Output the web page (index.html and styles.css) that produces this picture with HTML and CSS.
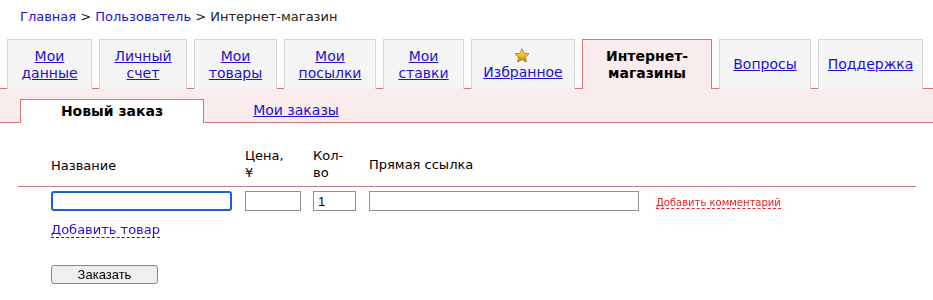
FILE: index.html
```html
<!DOCTYPE html>
<html lang="ru">
<head>
    <meta charset="UTF-8">
    <title>Интернет-магазин</title>
    <link rel="stylesheet" href="styles.css">
</head>
<body>
    <!-- хлебные крошки -->
    <div class="crumbs">
        <a href="#">Главная</a> &gt; <a href="#">Пользователь</a> &gt; Интернет-магазин
    </div>

    <!-- главные вкладки -->
    <ul class="tabs">
        <li class="tab"><a href="#">Мои<br>данные</a></li>
        <li class="tab"><a href="#">Личный<br>счет</a></li>
        <li class="tab"><a href="#">Мои<br>товары</a></li>
        <li class="tab"><a href="#">Мои<br>посылки</a></li>
        <li class="tab"><a href="#">Мои<br>ставки</a></li>
        <li class="tab">
            <span class="star">
                <svg width="16" height="15" viewBox="0 0 16 15">
                    <defs>
                        <linearGradient id="gold" x1="0" y1="0" x2="0" y2="1">
                            <stop offset="0" stop-color="#fff2a0"/>
                            <stop offset="0.5" stop-color="#f0c020"/>
                            <stop offset="1" stop-color="#c08010"/>
                        </linearGradient>
                    </defs>
                    <polygon points="8,0.8 10.1,5.4 15,5.8 11.3,9.1 12.4,14 8,11.4 3.6,14 4.7,9.1 1,5.8 5.9,5.4" fill="url(#gold)" stroke="#a87010" stroke-width="0.8" stroke-linejoin="round"/>
                </svg>
            </span>
            <a href="#">Избранное</a>
        </li>
        <li class="tab active">Интернет-<br>магазины</li>
        <li class="tab"><a href="#">Вопросы</a></li>
        <li class="tab"><a href="#">Поддержка</a></li>
    </ul>

    <!-- подвкладки -->
    <div class="subbar">
        <div class="subtab current">Новый заказ</div>
        <div class="subtab"><a href="#">Мои заказы</a></div>
    </div>

    <form class="order">
        <table class="items">
            <tr class="head">
                <th class="c-name">Название</th>
                <th class="c-price">Цена,<br>¥</th>
                <th class="c-qty">Кол-<br>во</th>
                <th class="c-link">Прямая ссылка</th>
                <th class="c-note"></th>
            </tr>
            <tr>
                <td class="c-name"><input type="text" class="inp inp-name" autofocus></td>
                <td class="c-price"><input type="text" class="inp inp-price"></td>
                <td class="c-qty"><input type="text" class="inp inp-qty" value="1"></td>
                <td class="c-link"><input type="text" class="inp inp-link"></td>
                <td class="c-note"><a href="#" class="dashed comment">Добавить комментарий</a></td>
            </tr>
        </table>

        <div class="add-row">
            <a href="#" class="dashed add">Добавить товар</a>
        </div>

        <div class="submit-row">
            <button type="button" class="btn">Заказать</button>
        </div>
    </form>
</body>
</html>
```

FILE: styles.css
```css
body {
    margin: 0;
    font-family: "DejaVu Sans", Verdana, sans-serif;
    color: #000;
    background: #fff;
}

a {
    color: #2411cf;
}

.crumbs {
    padding: 8px 0 0 20px;
    height: 18px;
    line-height: 18px;
    font-size: 13px;
    color: #222;
    margin-bottom: 13px;
}
.crumbs a {
    text-decoration: none;
}

/* главные вкладки */
.tabs {
    list-style: none;
    margin: 0 10px 0 7px;
    padding: 0;
    display: grid;
    grid-template-columns: 85px 88px 83px 92px 81px 104px 130px 92px 105px;
    column-gap: 7px;
    height: 49px;
    position: relative;
    z-index: 1;
}
.tab {
    display: flex;
    flex-direction: column;
    justify-content: center;
    align-items: center;
    text-align: center;
    font-size: 14px;
    line-height: 17px;
    background: #f5f5f5;
    border: 1px solid #d6d6d6;
    border-bottom: none;
}
.tab.active {
    height: 50px;
    box-sizing: border-box;
    font-weight: bold;
    background: #f8ecec;
    border-color: #d87474;
}
.star {
    display: block;
    height: 15px;
    margin: 0 3px 1px 0;
}
.star svg {
    display: block;
}

/* подвкладки */
.subbar {
    display: flex;
    align-items: flex-end;
    background: #f8ecec;
    border-top: 1px solid #d87474;
    border-bottom: 1px solid #d87474;
    padding: 10px 0 0 20px;
    height: 23px;
}
.subtab {
    width: 184px;
    height: 23px;
    box-sizing: border-box;
    text-align: center;
    font-size: 14px;
    line-height: 22px;
}
.subtab.current {
    height: 24px;
    margin-bottom: -1px;
    background: #fff;
    border: 1px solid #d87474;
    border-bottom: none;
    font-weight: bold;
}

/* форма заказа */
.order {
    padding: 24px 0 0 18px;
}
.items {
    width: 898px;
    border-collapse: collapse;
    font-size: 13px;
}
.items th {
    font-weight: normal;
    text-align: left;
    vertical-align: middle;
    line-height: 17px;
    padding: 0 0 5px 0;
    border-bottom: 1px solid #c47c7c;
}
.items .head .c-name {
    padding-top: 3px;
}
.items td {
    padding: 4px 0 0 0;
    vertical-align: middle;
}
.c-name { padding-left: 33px !important; width: 194px; }
.c-price { width: 68px; }
.c-qty { width: 56px; }
.c-link { width: 287px; }

.inp {
    display: block;
    box-sizing: border-box;
    height: 20px;
    border: 1px solid #8f8f8f;
    padding: 0 4px;
    font-family: "Liberation Sans", Arial, sans-serif;
    font-size: 13px;
    background: #fff;
    outline: none;
}
.inp-name {
    width: 181px;
    border: 2px solid #1d5fd0;
    border-radius: 3px;
    caret-color: #000;
}
.inp-price { width: 56px; }
.inp-qty { width: 43px; }
.inp-link { width: 270px; }

.dashed {
    text-decoration: none;
    border-bottom: 1px dashed currentColor;
}
.comment {
    color: #ee2020;
    font-size: 10px;
    line-height: 13px;
}

.add-row {
    padding: 11px 0 0 33px;
    font-size: 13px;
    line-height: 16px;
}

.submit-row {
    padding: 27px 0 0 33px;
}
.btn {
    display: block;
    width: 107px;
    height: 19px;
    padding: 0;
    font-family: "Liberation Sans", Arial, sans-serif;
    font-size: 13px;
    background: #efefef;
    border: 1px solid #888;
    border-radius: 3px;
    color: #000;
}
```
